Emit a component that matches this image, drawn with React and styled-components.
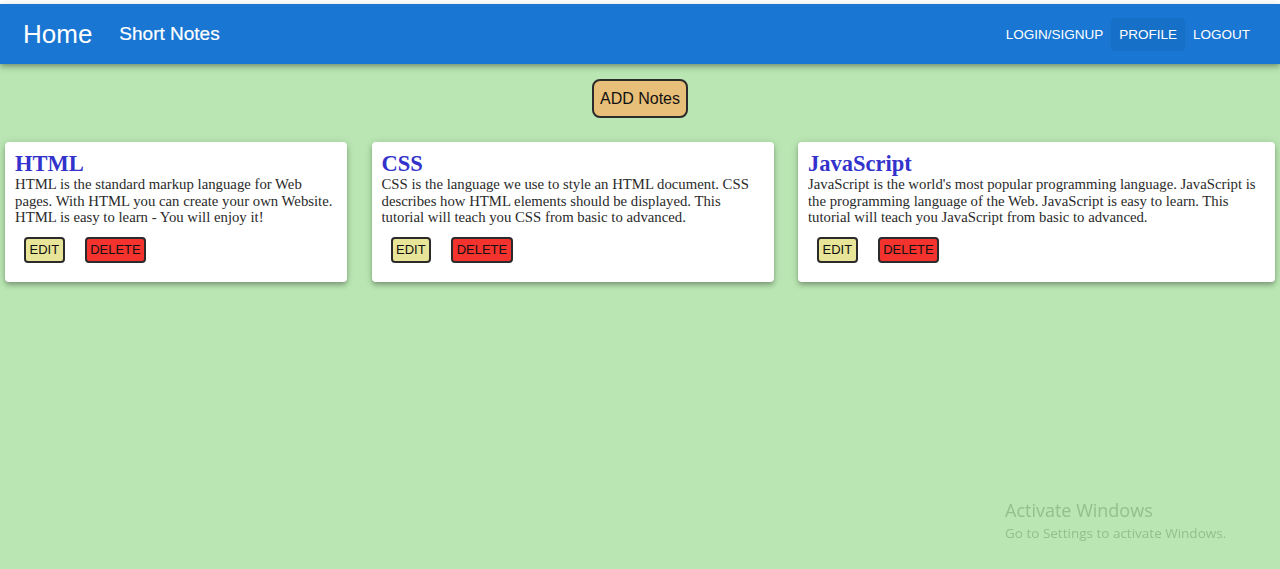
import React from "react";
import styled, { createGlobalStyle } from "styled-components";

const GlobalStyle = createGlobalStyle`
  html, body { margin: 0; padding: 0; background: #ffffff; }
  * { box-sizing: border-box; }
`;

const Page = styled.div`
  margin-top: 4px;
  min-height: 565px;
  background: #b9e6b2;
  display: flex;
  flex-direction: column;
  font-family: "Liberation Serif", "Times New Roman", serif;
`;

const NavBar = styled.header`
  height: 60px;
  background: #1976d2;
  color: #fff;
  display: flex;
  align-items: center;
  padding: 0 22px 0 23px;
  box-shadow: 0 2px 4px -1px rgba(0,0,0,0.2), 0 4px 5px 0 rgba(0,0,0,0.14), 0 1px 10px 0 rgba(0,0,0,0.12);
  position: relative;
  z-index: 1;
`;

const Brand = styled.span`
  font-family: "Liberation Sans", Arial, sans-serif;
  font-size: 26px;
  margin-right: 27px;
`;

const Title = styled.span`
  font-family: "Liberation Sans", Arial, sans-serif;
  font-size: 19px;
  flex: 1;
  -webkit-text-stroke: 0.2px #fff;
`;

const NavButton = styled.button`
  font-family: "Liberation Sans", Arial, sans-serif;
  font-size: 13.5px;
  line-height: 21px;
  text-transform: uppercase;
  color: #fff;
  background: ${(p) => (p.$active ? "rgba(0,0,0,0.045)" : "transparent")};
  border: none;
  border-radius: 4px;
  padding: 6px 8px;
  cursor: pointer;
`;

const Toolbar = styled.div`
  display: flex;
  justify-content: center;
  padding-top: 15px;
`;

const AddButton = styled.button`
  font-family: "Liberation Sans", Arial, sans-serif;
  font-size: 16px;
  color: #111;
  background: #e8bf78;
  border: 2px solid #2b2b2b;
  border-radius: 8px;
  padding: 9px 6px;
  line-height: 17px;
  cursor: pointer;
`;

const Grid = styled.div`
  display: grid;
  grid-template-columns: 342px 402px 477px;
  column-gap: 24.5px;
  padding: 24px 5px 0;
  align-items: start;
`;

const Card = styled.div`
  background: #fff;
  border-radius: 4px;
  box-shadow: 0 2px 4px -1px rgba(0,0,0,0.2), 0 4px 5px 0 rgba(0,0,0,0.14), 0 1px 10px 0 rgba(0,0,0,0.12);
  padding: 9px 10px 19px;
  height: 140px;
`;

const CardTitle = styled.h2`
  margin: 0;
  font-family: "Liberation Serif", "Times New Roman", serif;
  font-weight: bold;
  font-size: 22.5px;
  line-height: 25px;
  color: #3333cc;
`;

const CardText = styled.p`
  margin: 0;
  font-size: 14.75px;
  line-height: 16.5px;
  color: #2a2a2a;
`;

const Actions = styled.div`
  display: flex;
  gap: 20px;
  padding-left: 9px;
  margin-top: 11px;
`;

const ActionButton = styled.button`
  font-family: "Liberation Sans", Arial, sans-serif;
  font-size: 13px;
  line-height: 14px;
  color: #111;
  background: ${(p) => (p.$danger ? "#f4332e" : "#e8e598")};
  border: 2px solid #2b2b2b;
  border-radius: 4px;
  padding: 4px 3.5px;
  cursor: pointer;
`;

const Watermark = styled.div`
  position: fixed;
  left: 1005px;
  top: 498px;
  font-family: "Open Sans", "Noto Sans", sans-serif;
  color: #93c08d;
  pointer-events: none;
`;

const WatermarkTitle = styled.div`
  font-size: 18px;
  line-height: 24px;
`;

const WatermarkSub = styled.div`
  font-size: 13.5px;
  line-height: 18px;
  margin-top: 2px;
`;

const notes = [
  {
    title: "HTML",
    text: "HTML is the standard markup language for Web pages. With HTML you can create your own Website. HTML is easy to learn - You will enjoy it!",
  },
  {
    title: "CSS",
    text: "CSS is the language we use to style an HTML document. CSS describes how HTML elements should be displayed. This tutorial will teach you CSS from basic to advanced.",
  },
  {
    title: "JavaScript",
    text: "JavaScript is the world's most popular programming language. JavaScript is the programming language of the Web. JavaScript is easy to learn. This tutorial will teach you JavaScript from basic to advanced.",
  },
];

export default function App() {
  return (
    <>
      <GlobalStyle />
      <Page>
        <NavBar>
          <Brand>Home</Brand>
          <Title>Short Notes</Title>
          <NavButton>Login/Signup</NavButton>
          <NavButton $active>Profile</NavButton>
          <NavButton>Logout</NavButton>
        </NavBar>
        <Toolbar>
          <AddButton>ADD Notes</AddButton>
        </Toolbar>
        <Grid>
          {notes.map((n) => (
            <Card key={n.title}>
              <CardTitle>{n.title}</CardTitle>
              <CardText>{n.text}</CardText>
              <Actions>
                <ActionButton>EDIT</ActionButton>
                <ActionButton $danger>DELETE</ActionButton>
              </Actions>
            </Card>
          ))}
        </Grid>
        <Watermark>
          <WatermarkTitle>Activate Windows</WatermarkTitle>
          <WatermarkSub>Go to Settings to activate Windows.</WatermarkSub>
        </Watermark>
      </Page>
    </>
  );
}
